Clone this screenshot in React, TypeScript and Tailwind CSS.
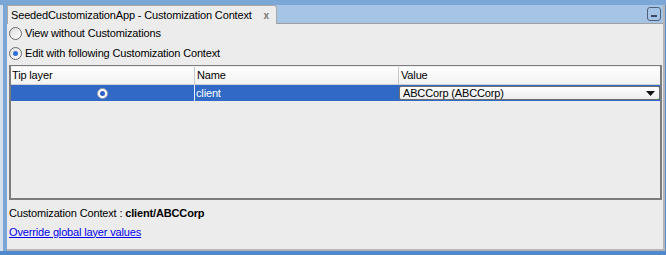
import React from "react"

const font = { fontFamily: "'Liberation Sans', Arial, sans-serif" }

function Radio({ checked }: { checked?: boolean }) {
  return (
    <span className="flex h-[13px] w-[13px] items-center justify-center rounded-full border border-[#6b6b6b] bg-gradient-to-br from-[#dcdcdc] to-white">
      {checked && <span className="h-[5px] w-[5px] rounded-full bg-[#2f6fd6]" />}
    </span>
  )
}

export default function App() {
  return (
    <div
      className="flex h-[255px] w-[666px] flex-col bg-[#7aa7d6] text-[11px] tracking-[-0.15px] text-black"
      style={font}
    >
      <div className="h-[5px] shrink-0" />
      <div className="flex min-h-0 flex-1">
        <div className="flex w-[7px] shrink-0">
          <div className="w-[3px] bg-[#d5e0ec]" />
          <div className="w-[4px] bg-[#7aa7d6]" />
        </div>
        <div className="flex flex-1 flex-col border-b-2 border-r-2 border-[#b4b4b4] bg-[#ececec]">
          <div className="flex h-[19px] shrink-0 bg-[#a6c5e6]">
            <div className="flex w-[270px] items-center justify-between whitespace-nowrap rounded-tr-[3px] border-l border-r border-t border-[#a8a8a8] bg-[#ececec] pl-[3px] pr-[7px]">
              <span>SeededCustomizationApp - Customization Context</span>
              <span className="text-[10px] font-bold text-[#777]">x</span>
            </div>
            <div className="flex flex-1 items-center justify-end border-b border-[#a0a0a0] pr-[2px]">
              <div className="flex h-[14px] w-[14px] items-end justify-center rounded-[3px] border border-[#50607a] pb-[3px]">
                <span className="h-[2px] w-[6px] bg-[#3a4a60]" />
              </div>
            </div>
          </div>
          <div className="flex flex-1 flex-col pl-[2px] pr-[1px]">
            <label className="mt-[3px] flex h-[13px] items-center gap-[3px] whitespace-nowrap">
              <Radio />
              <span>View without Customizations</span>
            </label>
            <label className="mt-[7px] flex h-[13px] items-center gap-[3px] whitespace-nowrap">
              <Radio checked />
              <span>Edit with following Customization Context</span>
            </label>
            <div className="mt-[5px] flex h-[135px] flex-col border-2 border-t border-[#7c7c7c] bg-[#ececec]">
              <div className="mt-[1px] flex h-[18px] border-b border-[#d0d0d0] bg-gradient-to-b from-white to-[#f2f2f2]">
                <div className="flex w-[184px] items-center border-r border-[#c8c8c8] pl-[1px]">Tip layer</div>
                <div className="flex w-[204px] items-center border-r border-[#c8c8c8] pl-[2px]">Name</div>
                <div className="flex flex-1 items-center pl-[2px]">Value</div>
              </div>
              <div className="flex h-[16px] bg-[#3169c6] text-white">
                <div className="flex w-[184px] items-center justify-center border-r border-[#e8eef8]">
                  <span className="flex h-[11px] w-[11px] items-center justify-center rounded-full border border-[#99a0aa] bg-white">
                    <span className="h-[5px] w-[5px] rounded-full bg-[#2f5fc8]" />
                  </span>
                </div>
                <div className="flex w-[204px] items-center pl-[1px]">client</div>
                <div className="flex flex-1 items-center py-[1px]">
                  <div className="flex h-full flex-1 items-center justify-between rounded-[2px] border border-[#6e6e6e] bg-gradient-to-b from-white to-[#ededed] pl-[3px] pr-[4px] text-black">
                    <span>ABCCorp (ABCCorp)</span>
                    <svg width="9" height="5" viewBox="0 0 9 5">
                      <path d="M0 0h9L4.5 5z" fill="#111" />
                    </svg>
                  </div>
                </div>
              </div>
            </div>
            <div className="mt-[5px] flex h-[16px] items-center whitespace-nowrap">
              <span>Customization Context :&nbsp;</span>
              <span className="font-bold">client/ABCCorp</span>
            </div>
            <a href="#" className="mt-[3px] flex h-[16px] items-center whitespace-nowrap text-[#0000ee] underline">
              Override global layer values
            </a>
          </div>
        </div>
        <div className="w-[1px] shrink-0 bg-[#5a8dcc]" />
      </div>
      <div className="h-[4px] shrink-0 bg-[#4f88cc]" />
    </div>
  )
}
